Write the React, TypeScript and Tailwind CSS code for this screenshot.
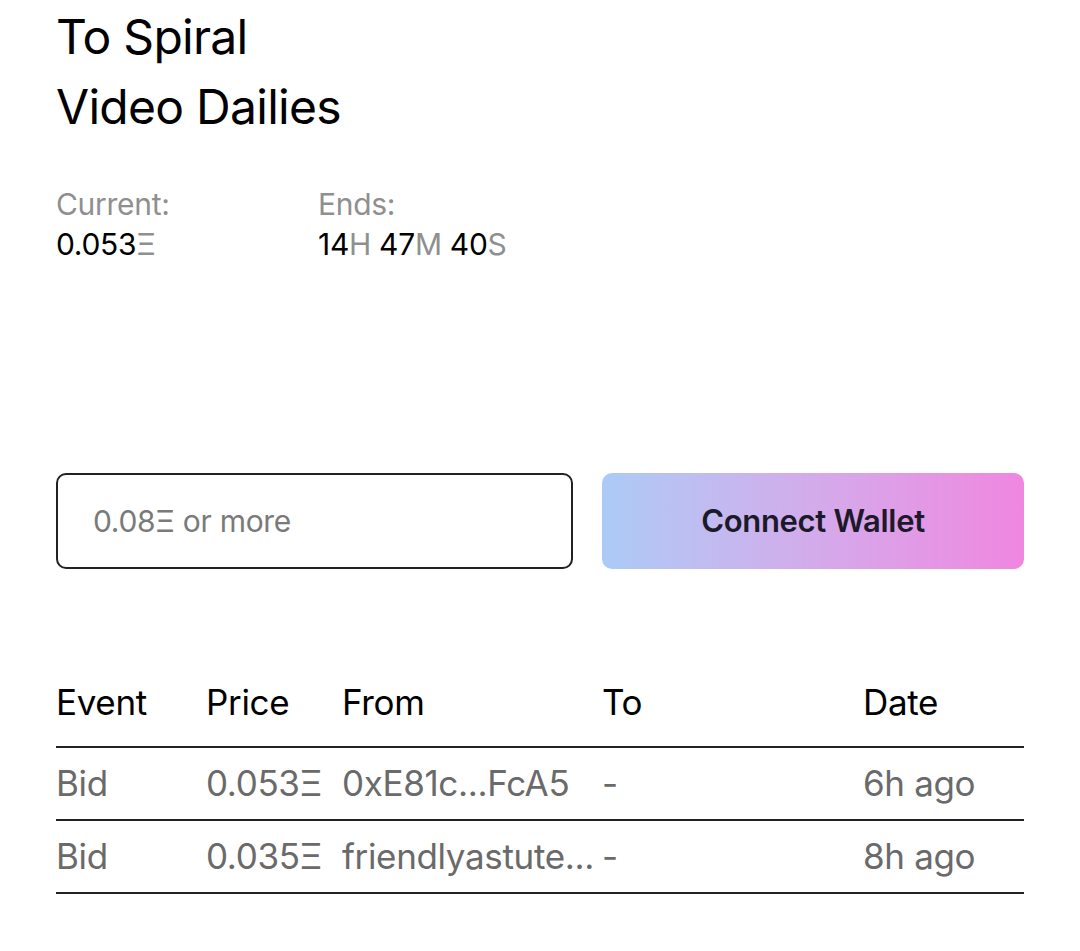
import React from "react";

const rows = [
  { event: "Bid", price: "0.053Ξ", from: "0xE81c...FcA5", to: "-", date: "6h ago" },
  { event: "Bid", price: "0.035Ξ", from: "friendlyastute...", to: "-", date: "8h ago" },
];

export default function App() {
  return (
    <div className="min-h-[951px] bg-white px-[56px] pt-[2px] text-black" style={{ fontFamily: "Inter, 'Noto Sans', sans-serif" }}>
      <h1 className="text-[48px] leading-[70px] tracking-[-0.015em] font-normal">
        <div>To Spiral</div>
        <div>Video Dailies</div>
      </h1>
      <div className="mt-[42px] flex text-[30px] leading-[40px] tracking-[-0.01em]">
        <div className="w-[262px]">
          <div className="text-[#8f8f8f]">Current:</div>
          <div>0.053<span className="text-[#8f8f8f]">Ξ</span></div>
        </div>
        <div>
          <div className="text-[#8f8f8f]">Ends:</div>
          <div>
            14<span className="text-[#8f8f8f]">H</span> 47<span className="text-[#8f8f8f]">M</span> 40<span className="text-[#8f8f8f]">S</span>
          </div>
        </div>
      </div>
      <div className="mt-[209px] flex gap-[29px]">
        <div className="flex h-[96px] w-[517px] items-center rounded-[10px] border-2 border-[#222] px-[35px] text-[30px] tracking-[-0.01em] text-[#7a7a7a]">
          0.08Ξ or more
        </div>
        <button className="flex h-[96px] flex-1 items-center justify-center rounded-[10px] bg-gradient-to-r from-[#abcbf6] to-[#ef86e0] text-[31px] font-semibold tracking-[-0.01em] text-[#1c1a2a]">
          Connect Wallet
        </button>
      </div>
      <div className="mt-[100px] text-[35px] tracking-[-0.01em]">
        <div className="flex h-[79px] items-center border-b-2 border-[#222] pb-[10px]">
          <div className="w-[150px]">Event</div>
          <div className="w-[136px]">Price</div>
          <div className="w-[260px]">From</div>
          <div className="w-[261px]">To</div>
          <div>Date</div>
        </div>
        {rows.map((r, i) => (
          <div key={i} className="flex h-[73px] items-center border-b-2 border-[#222] text-[#6a6a6a]">
            <div className="w-[150px]">{r.event}</div>
            <div className="w-[136px]">{r.price}</div>
            <div className="w-[260px] truncate">{r.from}</div>
            <div className="w-[261px]">{r.to}</div>
            <div>{r.date}</div>
          </div>
        ))}
      </div>
    </div>
  );
}
